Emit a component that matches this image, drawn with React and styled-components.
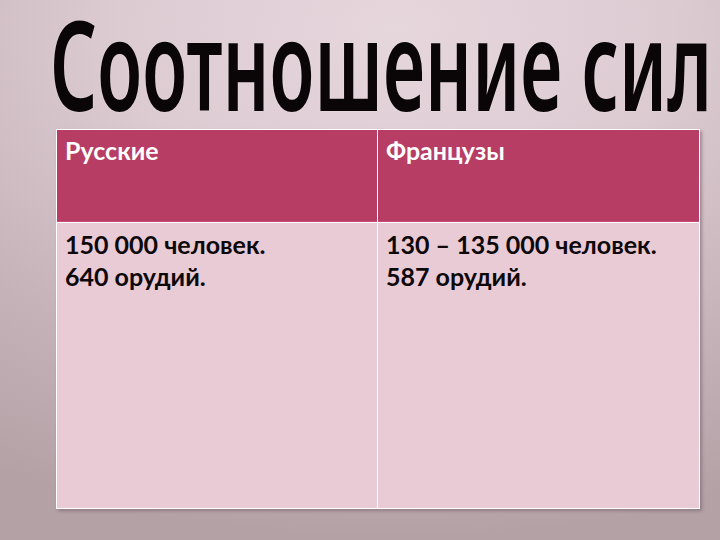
import React, { useLayoutEffect, useRef, useState } from "react";
import styled, { createGlobalStyle } from "styled-components";

const Global = createGlobalStyle`
  html, body { margin: 0; padding: 0; }
  body { width: 720px; height: 540px; overflow: hidden; }
`;

const Slide = styled.div`
  width: 720px;
  height: 540px;
  box-sizing: border-box;
  background: radial-gradient(ellipse 110% 95% at 55% 5%, #e6d7dd 0%, #ddcbd2 35%, #c6b3ba 70%, #b3a1a6 100%);
  display: flex;
  flex-direction: column;
  padding: 0 22px 0 56px;
  overflow: hidden;
`;

const TitleBox = styled.div`
  height: 129px;
  position: relative;
  margin-left: -6px;
  margin-right: -14px;
`;

const TitleText = styled.h1`
  position: absolute;
  left: 0;
  top: 10px;
  margin: 0;
  display: block;
  width: max-content;
  height: 106px;
  overflow: hidden;
  font-family: "Noto Sans", "Open Sans", sans-serif;
  font-weight: 600;
  font-size: 124px;
  line-height: 106px;
  color: #0a0506;
  white-space: nowrap;
  transform-origin: 0 0;
  text-shadow: 0 0 2px rgba(255,255,255,0.5);
`;

const Table = styled.div`
  display: grid;
  grid-template-columns: 320px 321px;
  grid-template-rows: 92px 285px;
  gap: 1px;
  background: #ffffff;
  border: 1px solid #ffffff;
  width: fit-content;
  box-shadow: 2px 2px 3px rgba(120, 100, 108, 0.6);
`;

const Cell = styled.div`
  background: ${p => (p.$head ? "#b73d65" : "#e8cbd5")};
  color: ${p => (p.$head ? "#ffffff" : "#0d0809")};
  border-bottom: ${p => (p.$head ? "1px solid #c84d74" : "none")};
  font-family: "Lato", "Open Sans", sans-serif;
  font-weight: 700;
  font-size: 25px;
  line-height: 32px;
  padding: ${p => (p.$head ? "4px 8px" : "5px 8px")};
`;

function Title() {
  const ref = useRef(null);
  const [sx, setSx] = useState(1);
  useLayoutEffect(() => {
    if (ref.current) {
      const w = ref.current.scrollWidth;
      if (w) setSx(662 / w);
    }
  }, []);
  return (
    <TitleText ref={ref} style={{ transform: `scaleX(${sx})` }}>
      Соотношение сил
    </TitleText>
  );
}

export default function App() {
  return (
    <>
      <Global />
      <Slide>
        <TitleBox>
          <Title />
        </TitleBox>
        <Table>
          <Cell $head>Русские</Cell>
          <Cell $head>Французы</Cell>
          <Cell>
            150 000 человек.
            <br />
            640 орудий.
          </Cell>
          <Cell>
            130 – 135 000 человек.
            <br />
            587 орудий.
          </Cell>
        </Table>
      </Slide>
    </>
  );
}
